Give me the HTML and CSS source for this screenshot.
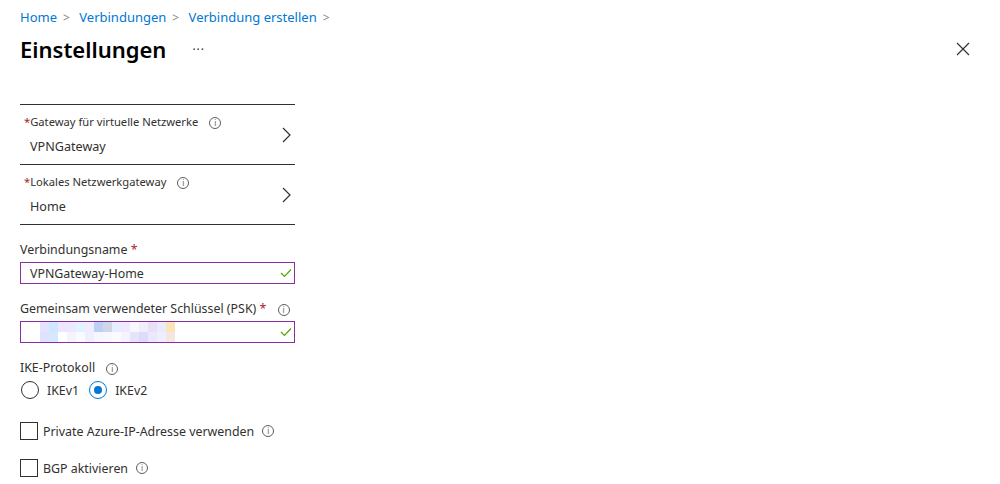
FILE: index.html
```html
<!DOCTYPE html>
<html lang="de">
<head>
    <meta charset="UTF-8">
    <title>Einstellungen</title>
    <link rel="stylesheet" href="styles.css">
</head>
<body>
    <div class="blade">
        <nav class="crumbs">
            <a href="#">Home</a><span class="sep">&gt;</span>
            <a href="#">Verbindungen</a><span class="sep">&gt;</span>
            <a href="#">Verbindung erstellen</a><span class="sep">&gt;</span>
        </nav>
        <div class="header">
            <h1>Einstellungen</h1>
            <span class="more">&middot;&middot;&middot;</span>
            <svg class="close" width="14" height="14" viewBox="0 0 14 14"><path d="M1 1 L13 13 M13 1 L1 13" stroke="#323130" stroke-width="1.2"/></svg>
        </div>

        <div class="form">
            <div class="picker">
                <div class="picker-row">
                    <div>
                        <div class="small-label"><span class="req">*</span>Gateway für virtuelle Netzwerke <i class="info">i</i></div>
                        <div class="value">VPNGateway</div>
                    </div>
                    <svg class="chev" width="9" height="16" viewBox="0 0 9 16"><path d="M1 1 L8 8 L1 15" fill="none" stroke="#323130" stroke-width="1.2"/></svg>
                </div>
                <div class="picker-row">
                    <div>
                        <div class="small-label"><span class="req">*</span>Lokales Netzwerkgateway <i class="info">i</i></div>
                        <div class="value">Home</div>
                    </div>
                    <svg class="chev" width="9" height="16" viewBox="0 0 9 16"><path d="M1 1 L8 8 L1 15" fill="none" stroke="#323130" stroke-width="1.2"/></svg>
                </div>
            </div>

            <div class="field">
                <label>Verbindungsname <span class="req">*</span></label>
                <div class="input">
                    <span>VPNGateway-Home</span>
                    <svg class="ok" width="12" height="10" viewBox="0 0 12 10"><path d="M1 5 L4.5 8.5 L11 1.5" fill="none" stroke="#57a300" stroke-width="1.2"/></svg>
                </div>
            </div>

            <div class="field">
                <label>Gemeinsam verwendeter Schlüssel (PSK) <span class="req">*</span> <i class="info">i</i></label>
                <div class="input">
                    <div class="blur">
                        <span style="background:#e3e4ff"></span><span style="background:#cfe6ff"></span><span style="background:#eee6ff"></span><span style="background:#ebe9ff"></span><span style="background:#e2f2ff"></span><span style="background:#f1edff"></span><span style="background:#bcd0f6"></span><span style="background:#cfd6e6"></span><span style="background:#e6eeff"></span><span style="background:#f2e8ff"></span><span style="background:#f8f6ff"></span><span style="background:#f1eefb"></span><span style="background:#e9e0f5"></span><span style="background:#e8ecff"></span><span style="background:#fde3b8"></span>
                        <span style="background:#dee2ff"></span><span style="background:#d6e8ff"></span><span style="background:#ffffff"></span><span style="background:#f4f4ff"></span><span style="background:#f7faff"></span><span style="background:#eef0ff"></span><span style="background:#f4f7ff"></span><span style="background:#f7f8ff"></span><span style="background:#fbfbff"></span><span style="background:#f5f3ff"></span><span style="background:#e4e5fb"></span><span style="background:#dcdcfa"></span><span style="background:#e9e8fc"></span><span style="background:#eeeeff"></span><span style="background:#f3e7e0"></span>
                    </div>
                    <svg class="ok" width="12" height="10" viewBox="0 0 12 10"><path d="M1 5 L4.5 8.5 L11 1.5" fill="none" stroke="#57a300" stroke-width="1.2"/></svg>
                </div>
            </div>

            <div class="field">
                <label>IKE-Protokoll <i class="info">i</i></label>
                <div class="radios">
                    <span class="radio"><span class="circle"></span>IKEv1</span>
                    <span class="radio"><span class="circle on"></span>IKEv2</span>
                </div>
            </div>

            <div class="check">
                <span class="box"></span>Private Azure-IP-Adresse verwenden <i class="info">i</i>
            </div>
            <div class="check">
                <span class="box"></span>BGP aktivieren <i class="info">i</i>
            </div>
        </div>
    </div>
</body>
</html>
```

FILE: styles.css
```css
body {
    margin: 0;
    font-family: "Noto Sans", "Open Sans", sans-serif;
    font-size: 12.4px;
    color: #323130;
    background: #fff;
}
.blade {
    padding: 0 20px;
}
.crumbs {
    padding-top: 8px;
    height: 20px;
    font-size: 13px;
    line-height: 18px;
}
.crumbs a {
    color: #0078d4;
    text-decoration: none;
}
.crumbs .sep {
    color: #8a8886;
    margin: 0 6px;
    font-size: 12px;
}
.header {
    display: flex;
    align-items: center;
    height: 42px;
}
.header h1 {
    margin: 0;
    font-size: 22px;
    font-weight: 600;
    color: #000;
}
.more {
    margin-left: 26px;
    font-size: 12px;
    letter-spacing: 1px;
}
.close {
    margin-left: auto;
    margin-right: 10px;
}
.form {
    width: 275px;
    margin-top: 34px;
}
.picker {
    border-top: 1px solid #323130;
}
.picker-row {
    display: flex;
    justify-content: space-between;
    align-items: center;
    height: 59px;
    border-bottom: 1px solid #323130;
    padding: 0 4px;
}
.small-label {
    font-size: 11.2px;
    line-height: 16px;
    white-space: nowrap;
}
.value {
    margin-top: 8px;
    padding-left: 6px;
    font-size: 12.6px;
    line-height: 18px;
}
.req {
    color: #a4262c;
}
.info {
    display: inline-flex;
    align-items: center;
    justify-content: center;
    width: 10px;
    height: 10px;
    border: 1px solid #605e5c;
    border-radius: 50%;
    font-size: 8px;
    font-style: normal;
    line-height: 1;
    color: #605e5c;
    margin-left: 8px;
}
.field {
    margin-top: 16px;
}
.field label {
    display: block;
    line-height: 18px;
    margin-bottom: 3px;
    white-space: nowrap;
}
.input {
    display: flex;
    align-items: center;
    justify-content: space-between;
    height: 20px;
    border: 1px solid #8a2da5;
    padding: 0 2px 0 9px;
}
.blur {
    display: grid;
    grid-template-columns: repeat(15, 9px);
    grid-template-rows: 10px 10px;
    margin-left: 10px;
}
.radios {
    display: flex;
    gap: 9px;
    margin-top: 4px;
}
.radio {
    display: flex;
    align-items: center;
}
.circle {
    width: 18px;
    height: 18px;
    border: 1px solid #323130;
    border-radius: 50%;
    margin-right: 8px;
    box-sizing: border-box;
    position: relative;
    margin-left: 1px;
}
.circle.on {
    border-color: #0078d4;
}
.circle.on::after {
    content: "";
    position: absolute;
    left: 4px;
    top: 4px;
    width: 8px;
    height: 8px;
    border-radius: 50%;
    background: #0078d4;
}
.check {
    display: flex;
    align-items: center;
    width: 400px;
    margin-top: 23px;
}
.check + .check {
    margin-top: 19px;
}
.box {
    width: 18px;
    height: 18px;
    border: 1px solid #323130;
    box-sizing: border-box;
    margin-right: 5px;
}
```
